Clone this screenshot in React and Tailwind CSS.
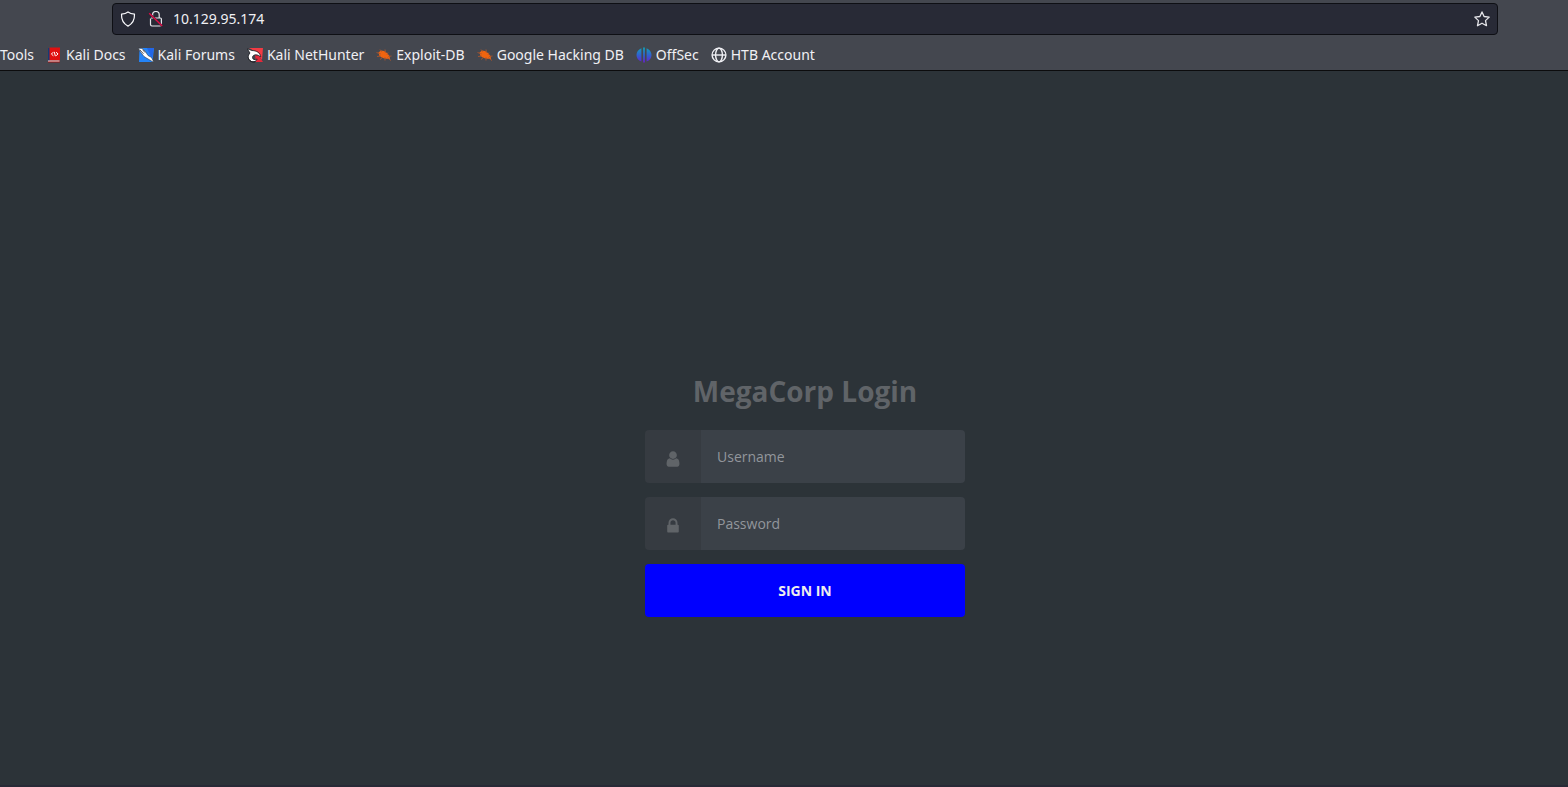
import React from "react";

function ShieldIcon() {
  return (
    <svg className="size-4" viewBox="0 0 16 16" fill="none" stroke="#fbfbfe" strokeWidth="1.2" strokeLinejoin="round" aria-hidden="true">
      <path d="M8 .9C6.300 2.200 4 2.900 1.500 3.100c-.2 5.400 1.600 9.600 6.500 12 4.900-2.400 6.700-6.600 6.500-12C12 2.900 9.700 2.200 8 .9z" />
    </svg>
  );
}

function InsecureIcon() {
  return (
    <svg className="size-4" viewBox="0 0 16 16" fill="none" aria-hidden="true">
      <path d="M4.600 7V3.800a3.300 3.300 0 0 1 6.600 0V7M3 7h9.400a1 1 0 0 1 1 1v5.600a1.400 1.400 0 0 1-1.400 1.400H3.900a1.400 1.400 0 0 1-1.400-1.400V7.500" stroke="#e6e6ec" strokeWidth="1.200" />
      <path d="M1.200 2.200 14.200 15" stroke="#282a36" strokeWidth="2" />
      <path d="M1.200 2.200 14.200 15" stroke="#e20b46" strokeWidth="1.400" />
    </svg>
  );
}

function StarIcon() {
  return (
    <svg className="size-4" viewBox="0 0 16 16" fill="none" stroke="#e6e6ea" strokeWidth="1.300" strokeLinejoin="round" aria-hidden="true">
      <path d="M8 .9 10.100 5.500 15.200 6.100 11.500 9.600 12.500 14.700 8 12.200 3.500 14.700 4.500 9.600 .8 6.100 5.900 5.500z" />
    </svg>
  );
}

function DocsIcon() {
  return (
    <svg className="size-4" viewBox="0 0 16 16" aria-hidden="true">
      <path d="M2 1h2v14H2z" fill="#163a76" />
      <path d="M3.500 .5H14v13H3.500z" fill="#e01010" />
      <path d="M2 13.500h11.500V15H2z" fill="#f5dcdc" />
      <path d="M2 14.500h12v1H2z" fill="#a01313" />
      <path d="M7.200 5.200 5.400 7.100l2 1.700M10 5.200l2 1.700-1.800 1.900M8.200 4.800l1.200 4.400" stroke="#fff" strokeWidth="1" fill="none" />
    </svg>
  );
}

function ForumsIcon() {
  return (
    <svg className="size-4" viewBox="0 0 16 16" aria-hidden="true">
      <path d="M1.500 1H16l-1.500 14H1z" fill="#2484f8" />
      <path d="M9 1h7l-2 11z" fill="#2366e8" />
      <path d="M.2 1.200 4.500 1.500 7 4l3 4.500 3.500 2L16 15.500 11 12.500 6 9.500 2.500 5z" fill="#fff" stroke="#20242c" strokeWidth=".5" />
      <path d="m1.800 2.800 3.700 4M4.500 2.500 7 5.500" stroke="#30343b" strokeWidth=".8" />
    </svg>
  );
}

function NetHunterIcon() {
  return (
    <svg className="size-4" viewBox="0 0 16 16" aria-hidden="true">
      <path d="M2 1h14l-1 12L9 5z" fill="#f23b43" />
      <path d="M8 8l4 1 4 6H9z" fill="#e5283a" />
      <path d="M.2 1.800 5 3.500c5 .2 8 2.200 8.800 6.300L11.500 8.500C9 7 5.500 8 5.500 10.500c0 2 2.300 2.800 4.700 1.500-.7 2.500-3.700 3.500-6 2.500C.5 12.500.5 8.500 3 6z" fill="#fff" stroke="#17191e" strokeWidth=".8" />
      <path d="M1.200 10.500c.8 3.500 3.500 4.800 7 4.300" fill="none" stroke="#17191e" strokeWidth="1" />
    </svg>
  );
}

function BugIcon() {
  return (
    <svg className="size-4" viewBox="0 0 16 16" aria-hidden="true">
      <path d="M2.500 5.500 5 3.500l3 .5 3 2 2.500 3 .5 3-3.500-.2-4-.8-3-2z" fill="#f0640f" />
      <path d="M.5 5.500 5 7M4 2.500 6 5M9 2.500 9.500 6M12 5.500 11 8M15.500 9 12 9.500M1 9.500 5 9M4 12.500 7 10M9 13.500 9 10M15 13.500 11 10.500" stroke="#b75728" strokeWidth=".8" />
    </svg>
  );
}

function OffSecIcon() {
  return (
    <svg className="size-4" viewBox="0 0 16 16" aria-hidden="true">
      <defs>
        <linearGradient id="offsec-fill" x1="0" y1="0" x2="0" y2="1">
          <stop offset="0" stopColor="#10a2b8" />
          <stop offset=".55" stopColor="#335cd0" />
          <stop offset="1" stopColor="#6722c8" />
        </linearGradient>
      </defs>
      <path d="M5.400 1.200v13.400C2.200 13.300.5 11 .5 8s1.700-5.500 4.900-6.800zM7.100.5h1.800v15H7.100zM10.600 1.200c3.200 1.300 4.900 3.800 4.900 6.800s-1.700 5.300-4.900 6.600z" fill="url(#offsec-fill)" />
    </svg>
  );
}

function GlobeIcon() {
  return (
    <svg className="size-4" viewBox="0 0 16 16" fill="none" stroke="#f0f0f4" strokeWidth="1.400" aria-hidden="true">
      <circle cx="8" cy="8" r="6.900" />
      <ellipse cx="8" cy="8" rx="3.400" ry="6.900" />
      <path d="M1.200 8h13.600" />
    </svg>
  );
}

function UserIcon() {
  return (
    <svg className="size-[18px]" viewBox="0 0 1792 1792" fill="currentColor" aria-hidden="true">
      <path d="M1536 1399q0 109-62.500 187t-150.500 78h-854q-88 0-150.500-78t-62.500-187q0-85 8.500-160.500t31.500-152 58.500-131 94-89 134.500-34.500q131 128 313 128t313-128q76 0 134.500 34.500t94 89 58.500 131 31.500 152 8.500 160.500zm-256-887q0 159-112.500 271.500t-271.500 112.500-271.500-112.500-112.500-271.500 112.500-271.500 271.500-112.500 271.500 112.500 112.500 271.500z" />
    </svg>
  );
}

function LockIcon() {
  return (
    <svg className="size-[18px]" viewBox="0 0 1792 1792" fill="currentColor" aria-hidden="true">
      <path d="M640 768h512v-192q0-106-75-181t-181-75-181 75-75 181v192zm832 96v576q0 40-28 68t-68 28h-960q-40 0-68-28t-28-68v-576q0-40 28-68t68-28h32v-192q0-184 132-316t316-132 316 132 132 316v192h32q40 0 68 28t28 68z" />
    </svg>
  );
}

const bookmarks = [
  { name: "Kali Docs", Icon: DocsIcon },
  { name: "Kali Forums", Icon: ForumsIcon },
  { name: "Kali NetHunter", Icon: NetHunterIcon },
  { name: "Exploit-DB", Icon: BugIcon },
  { name: "Google Hacking DB", Icon: BugIcon },
  { name: "OffSec", Icon: OffSecIcon },
  { name: "HTB Account", Icon: GlobeIcon },
];

function Field({ id, type, placeholder, Icon }) {
  return (
    <div className="flex h-[53px]">
      <label htmlFor={id} className="flex w-14 items-center justify-center rounded-l bg-[#363b41] pt-1 text-[#606468]">
        <Icon />
      </label>
      <input
        id={id}
        type={type}
        aria-label={placeholder}
        placeholder={placeholder}
        className="min-w-0 flex-1 rounded-r bg-[#3b4148] px-4 text-sm text-[#eeeeee] outline-none placeholder:text-[#92969c]"
      />
    </div>
  );
}

export default function App() {
  return (
    <div className="flex min-h-screen flex-col border-b-2 border-[#282a36] bg-[#2c3338] font-['Open_Sans',sans-serif]">
      <header className="border-b border-[#0c0c0d] bg-[#44474f] font-['Noto_Sans',sans-serif] text-[#f0f0f4]">
        <div className="flex pt-[3px] pr-[70px] pl-28">
          <div className="flex h-8 flex-1 items-center rounded border border-[#0e0f14] bg-[#282a36] px-[7px]">
            <ShieldIcon />
            <span className="w-3" />
            <InsecureIcon />
            <input
              aria-label="Address"
              defaultValue="10.129.95.174"
              className="ml-[9px] min-w-0 flex-1 bg-transparent text-sm outline-none"
            />
            <button type="button" aria-label="Bookmark this page">
              <StarIcon />
            </button>
          </div>
        </div>
        <nav className="flex h-[35px] items-center gap-3 pt-1 text-sm whitespace-nowrap">
          <a href="#tools">Tools</a>
          {bookmarks.map(({ name, Icon }) => (
            <a key={name} href="#bookmark" className="flex items-center gap-1">
              <Icon />
              {name}
            </a>
          ))}
        </nav>
      </header>
      <main className="flex flex-1 justify-center pt-[301px] pl-[42px]">
        <form className="flex w-80 flex-col gap-3.5" onSubmit={(e) => e.preventDefault()}>
          <h1 className="pb-1.5 text-center text-[28px] leading-[38px] font-bold text-[#606468]">MegaCorp Login</h1>
          <Field id="username" type="text" placeholder="Username" Icon={UserIcon} />
          <Field id="password" type="password" placeholder="Password" Icon={LockIcon} />
          <button type="submit" className="h-[53px] rounded bg-[#0000ff] text-sm font-bold text-[#eeeeee]">
            SIGN IN
          </button>
        </form>
      </main>
    </div>
  );
}
